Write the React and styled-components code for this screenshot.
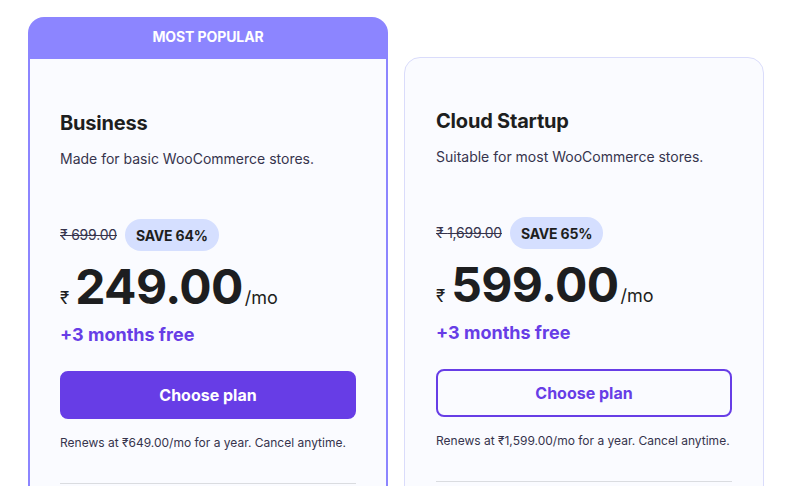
import styled, { createGlobalStyle } from "styled-components";

const PURPLE = "#673de6";
const RIBBON = "#8c85ff";
const INK = "#1d1e20";

const Global = createGlobalStyle`
  *, *::before, *::after { box-sizing: border-box; }
  html, body {
    margin: 0;
    background: #ffffff;
    font-family: Inter, "Noto Sans", "DejaVu Sans", sans-serif;
    color: ${INK};
    overflow: hidden;
  }
`;

const Page = styled.div`
  display: flex;
  align-items: flex-start;
  gap: 16px;
  padding: 17px 28px 0;
`;

const Column = styled.div`
  flex: 0 0 360px;
  width: 360px;
  display: flex;
  flex-direction: column;
  padding-top: ${(p) => (p.$popular ? "0" : "40px")};
`;

const Ribbon = styled.div`
  height: 42px;
  display: flex;
  align-items: center;
  justify-content: center;
  padding-bottom: 3px;
  background: ${RIBBON};
  border-radius: 16px 16px 0 0;
  color: #ffffff;
  font-size: 14px;
  font-weight: 700;
  letter-spacing: -0.1px;
`;

const Card = styled.div`
  background: #fafbff;
  border: ${(p) => (p.$popular ? `2px solid ${RIBBON}` : "1px solid #dadcfb")};
  border-top: ${(p) => (p.$popular ? "none" : "1px solid #dadcfb")};
  border-radius: ${(p) => (p.$popular ? "0 0 16px 16px" : "16px")};
  padding: ${(p) => (p.$popular ? "50px 30px" : "49px 31px")} 120px;
  display: flex;
  flex-direction: column;
`;

const Title = styled.h3`
  margin: 0;
  font-size: 20px;
  line-height: 28px;
  font-weight: 700;
  letter-spacing: -0.2px;
`;

const Description = styled.p`
  margin: 12px 0 0;
  font-size: 14px;
  line-height: 20px;
  color: #36344d;
`;

const SaveRow = styled.div`
  display: flex;
  align-items: center;
  gap: 8px;
  margin-top: 50px;
`;

const OldPrice = styled.span`
  font-size: 14px;
  line-height: 20px;
  color: #36344d;
  text-decoration: line-through;
  letter-spacing: -0.2px;
`;

const Badge = styled.span`
  height: 32px;
  display: inline-flex;
  align-items: center;
  padding: 0 11px;
  border-radius: 16px;
  background: #d5dfff;
  font-size: 14px;
  font-weight: 700;
  letter-spacing: -0.2px;
  color: ${INK};
`;

const PriceRow = styled.div`
  display: flex;
  align-items: baseline;
  margin-top: 14px;
  line-height: 44px;
`;

const Currency = styled.span`
  font-size: 17px;
  margin-right: 6px;
`;

const Amount = styled.span`
  font-size: 48px;
  font-weight: 700;
  letter-spacing: -0.6px;
`;

const Per = styled.span`
  font-size: 18px;
  margin-left: 2px;
`;

const Bonus = styled.div`
  margin-top: 3px;
  font-size: 18px;
  line-height: 24px;
  font-weight: 700;
  color: ${PURPLE};
`;

const Button = styled.button`
  margin-top: 24px;
  height: 48px;
  width: 100%;
  border-radius: 8px;
  font-family: inherit;
  font-size: 16px;
  font-weight: 700;
  cursor: pointer;
  border: 2px solid ${PURPLE};
  background: ${(p) => (p.$primary ? PURPLE : "transparent")};
  color: ${(p) => (p.$primary ? "#ffffff" : PURPLE)};
`;

const Renews = styled.p`
  margin: 16px 0 0;
  font-size: 12px;
  line-height: 16px;
  color: #36344d;
`;

const Divider = styled.hr`
  margin: 32px 0 0;
  border: none;
  border-top: 1px solid #dadce0;
`;

const plans = [
  {
    name: "Business",
    description: "Made for basic WooCommerce stores.",
    oldPrice: "699.00",
    save: "SAVE 64%",
    price: "249.00",
    renews: "₹649.00",
    popular: true,
  },
  {
    name: "Cloud Startup",
    description: "Suitable for most WooCommerce stores.",
    oldPrice: "1,699.00",
    save: "SAVE 65%",
    price: "599.00",
    renews: "₹1,599.00",
    popular: false,
  },
];

export default function App() {
  return (
    <>
      <Global />
      <Page>
        {plans.map((plan) => (
          <Column key={plan.name} $popular={plan.popular}>
            {plan.popular && <Ribbon>MOST POPULAR</Ribbon>}
            <Card $popular={plan.popular}>
              <Title>{plan.name}</Title>
              <Description>{plan.description}</Description>
              <SaveRow>
                <OldPrice>₹ {plan.oldPrice}</OldPrice>
                <Badge>{plan.save}</Badge>
              </SaveRow>
              <PriceRow>
                <Currency>₹</Currency>
                <Amount>{plan.price}</Amount>
                <Per>/mo</Per>
              </PriceRow>
              <Bonus>+3 months free</Bonus>
              <Button $primary={plan.popular}>Choose plan</Button>
              <Renews>
                Renews at {plan.renews}/mo for a year. Cancel anytime.
              </Renews>
              <Divider />
            </Card>
          </Column>
        ))}
      </Page>
    </>
  );
}
